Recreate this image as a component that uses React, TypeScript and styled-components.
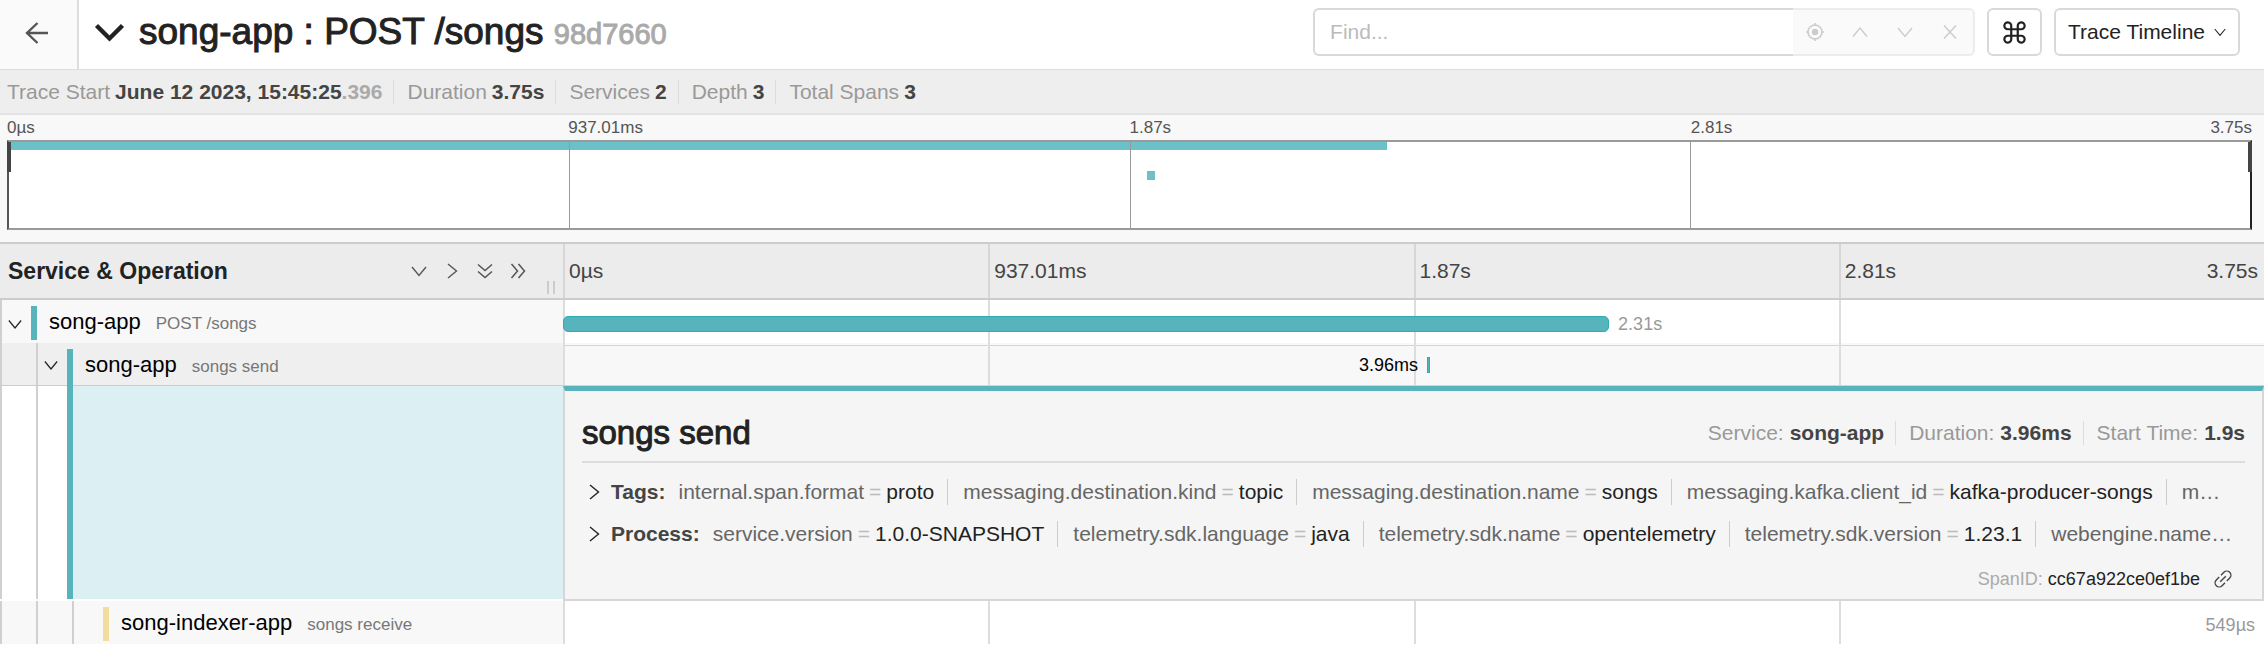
import React from "react";
import styled, { createGlobalStyle, css } from "styled-components";

const TEAL = "#57b4bd";
const SAND = "#f2dca0";

const GlobalStyle = createGlobalStyle`
  *, *::before, *::after { box-sizing: border-box; }
  html, body { margin: 0; padding: 0; background: #fff; }
  body {
    font-family: "Liberation Sans", Arial, sans-serif;
    font-size: 21px;
    line-height: 24px;
    color: #222;
    overflow-x: hidden;
  }
  button, input { font: inherit; color: inherit; margin: 0; }
  h1, h2, h3, ul, dl, dd { margin: 0; padding: 0; font-weight: 400; }
`;

const medium = css`
  -webkit-text-stroke: 1px currentColor;
`;

/* ---------- icons ---------- */

const Svg = styled.svg<{ $stroke?: number }>`
  display: block;
  flex: none;
  overflow: visible;
  fill: none;
  stroke: currentColor;
  stroke-width: ${(p) => p.$stroke ?? 1};
`;

type Dir = "down" | "right" | "up";
const chevrons: Record<Dir, string> = {
  down: "M1 4 L8 12.5 L15 4",
  up: "M1 12.5 L8 4 L15 12.5",
  right: "M4 1 L12.5 8 L4 15",
};

const Chevron = ({ dir, size = 16, stroke = 1.4 }: { dir: Dir; size?: number; stroke?: number }) => (
  <Svg width={size} height={size} viewBox="0 0 16 16" $stroke={stroke} aria-hidden>
    <path d={chevrons[dir]} />
  </Svg>
);

const DoubleDown = () => (
  <Svg width={16} height={16} viewBox="0 0 16 16" $stroke={1.5} aria-hidden>
    <path d="M1 1.5 L8 7.5 L15 1.5 M1 8.5 L8 14.5 L15 8.5" />
  </Svg>
);

const DoubleRight = () => (
  <Svg width={16} height={16} viewBox="0 0 16 16" $stroke={1.5} aria-hidden>
    <path d="M1.5 1 L7.5 8 L1.5 15 M8.5 1 L14.5 8 L8.5 15" />
  </Svg>
);

const BackArrow = () => (
  <Svg width={24} height={22} viewBox="0 0 24 22" $stroke={2.4} aria-hidden>
    <path d="M12.5 1 L2 11 L12.5 21 M2 11 H23" />
  </Svg>
);

const BigChevron = () => (
  <Svg width={29} height={18} viewBox="0 0 29 18" $stroke={4.4} aria-hidden>
    <path d="M1.5 1.5 L14.5 14.5 L27.5 1.5" />
  </Svg>
);

const Locate = () => (
  <Svg width={18} height={18} viewBox="0 0 18 18" $stroke={1.6} aria-hidden>
    <circle cx="9" cy="9" r="7" />
    <circle cx="9" cy="9" r="3.2" fill="currentColor" stroke="none" />
    <path d="M9 0 V3 M9 15 V18 M0 9 H3 M15 9 H18" />
  </Svg>
);

const Cross = () => (
  <Svg width={16} height={16} viewBox="0 0 16 16" $stroke={1.5} aria-hidden>
    <path d="M2 1.5 L14 14.5 M14 1.5 L2 14.5" />
  </Svg>
);

const Command = () => (
  <Svg width={23} height={23} viewBox="0 0 24 24" $stroke={2.3} aria-hidden>
    <path d="M15.4 5.2 V18.8 A3.6 3.6 0 1 0 19 15.4 H5 A3.6 3.6 0 1 0 8.6 18.8 V5.2 A3.6 3.6 0 1 0 5 8.6 H19 A3.6 3.6 0 1 0 15.4 5.2 Z" />
  </Svg>
);

const LinkIcon = () => (
  <Svg width={16} height={16} viewBox="0 0 16 16" $stroke={1.4} aria-hidden>
    <path d="M6 4.2 L8.9 1.3 A3.4 3.4 0 0 1 14.7 7.1 L11.8 10 M10 11.8 L7.1 14.7 A3.4 3.4 0 0 1 1.3 8.9 L4.2 6 M5.2 10.8 L10.8 5.2" />
  </Svg>
);

/* ---------- page header ---------- */

const Header = styled.header`
  display: flex;
  align-items: stretch;
  height: 70px;
  border-bottom: 1px solid #ddd;
`;

const BackLink = styled.a`
  display: flex;
  align-items: center;
  justify-content: center;
  width: 79px;
  padding: 0 4px 4px 0;
  background: #fafafa;
  border-right: 2px solid #ddd;
  color: #555;
`;

const TitleToggle = styled.button`
  display: flex;
  align-items: center;
  gap: 15px;
  padding: 0 0 4px 16px;
  border: 0;
  background: none;
  color: #222;
`;

const TraceTitle = styled.h1`
  font-size: 37px;
  line-height: 44px;
  white-space: nowrap;
  ${medium}
`;

const TraceId = styled.small`
  font-size: 29px;
  color: #aaa;
`;

const Tools = styled.div`
  display: flex;
  flex: 1;
  justify-content: flex-end;
  gap: 12px;
  padding: 8px 24px 13px;
`;

const Search = styled.div`
  display: flex;
  width: 662px;
`;

const FindInput = styled.input`
  flex: 1;
  min-width: 0;
  padding: 0 15px;
  border: 2px solid #d9d9d9;
  border-right: 0;
  border-radius: 6px 0 0 6px;
  background: #fff;
  &::placeholder { color: #bbb; opacity: 1; }
`;

const SearchActions = styled.div`
  display: flex;
  align-items: center;
  width: 182px;
  padding-right: 1px;
  border: 2px solid #ececec;
  border-left: 0;
  border-radius: 0 6px 6px 0;
  background: #fafafa;
`;

const IconButton = styled.button`
  display: flex;
  align-items: center;
  justify-content: center;
  flex: 1;
  padding: 0;
  border: 0;
  background: none;
  color: #ccc;
`;

const OutlineButton = styled.button`
  display: flex;
  align-items: center;
  justify-content: center;
  gap: 9px;
  min-width: 55px;
  padding: 0 12px;
  border: 2px solid #d9d9d9;
  border-radius: 6px;
  background: #fff;
  white-space: nowrap;
`;

/* ---------- summary strip ---------- */

const Summary = styled.dl`
  display: flex;
  align-items: center;
  height: 45px;
  padding: 0 7px;
  background: #eee;
  border-bottom: 2px solid #e4e4e4;
`;

const Fact = styled.div`
  display: flex;
  gap: 5px;
  white-space: nowrap;
  & + & {
    margin-left: 11px;
    padding-left: 13px;
    border-left: 1px solid #ddd;
  }
`;

const FactName = styled.dt`
  color: #999;
`;

const FactValue = styled.dd`
  font-weight: 700;
  color: #444;
`;

const Muted = styled.span`
  color: #aaa;
`;

/* ---------- minimap ---------- */

const Minimap = styled.section`
  padding: 0 12px 12px 7px;
  background: #f8f8f8;
`;

const Ticks = styled.div<{ $small?: boolean }>`
  display: grid;
  grid-template-columns: repeat(4, 1fr);
  font-size: ${(p) => (p.$small ? "17px" : "21px")};
  line-height: 25px;
  color: ${(p) => (p.$small ? "#555" : "#444")};
`;

const Tick = styled.span`
  display: flex;
  justify-content: space-between;
`;

const MapBox = styled.div`
  position: relative;
  height: 90px;
  border: 2px solid #999;
  border-left-color: #555;
  border-right-color: #222;
  background: #fff;
`;

const MapGrid = styled.div`
  display: grid;
  grid-template-columns: repeat(4, 1fr);
  height: 100%;
  & > i + i { position: relative; border-left: 1px solid #999; }
`;

const MapSpan = styled.i<{ $top: number; $h: number; $left: string; $width: string }>`
  position: absolute;
  top: ${(p) => p.$top}px;
  left: ${(p) => p.$left};
  width: ${(p) => p.$width};
  height: ${(p) => p.$h}px;
  background: #6cc1c8;
`;

const Handle = styled.i<{ $side: "left" | "right" }>`
  position: absolute;
  top: 0;
  ${(p) => p.$side}: -2px;
  width: 4px;
  height: 30px;
  background: #444;
`;

/* ---------- timeline ---------- */

const Columns = styled.div`
  display: grid;
  grid-template-columns: 563px minmax(0, 1fr);
`;

const TimelineHead = styled(Columns)`
  height: 58px;
  background: #ececec;
  border-top: 2px solid #ccc;
  border-bottom: 2px solid #ccc;
`;

const NameHead = styled.div`
  position: relative;
  display: flex;
  align-items: center;
  justify-content: space-between;
  padding: 0 37px 0 8px;
`;

const HeadTitle = styled.h2`
  font-size: 23px;
  font-weight: 700;
`;

const Expanders = styled.div`
  display: flex;
  gap: 17px;
  color: #555;
  & > button { flex: none; color: inherit; }
`;

const Resizer = styled.i`
  position: absolute;
  right: 8px;
  bottom: 4px;
  width: 8px;
  height: 13px;
  border: solid #ccc;
  border-width: 0 2px;
`;

const HeadTicks = styled(Ticks)`
  line-height: 54px;
  & > span { padding: 0 6px 0 4px; border-left: 2px solid #d6d6d6; }
`;

const Row = styled(Columns)<{ $active?: boolean }>`
  height: 43px;
  background: ${(p) => (p.$active ? "#f8f8f8" : "#fff")};
`;

const NameCell = styled.div<{ $active?: boolean }>`
  display: flex;
  background: ${(p) => (p.$active ? "#efefef" : "#f8f8f8")};
  border-bottom: 1px solid ${(p) => (p.$active ? "#ccc" : "#fff")};
`;

const Indent = styled.i`
  flex: none;
  width: 36px;
  border-left: 2px solid #d0d0d0;
`;

const Toggle = styled.button`
  display: flex;
  align-items: center;
  justify-content: center;
  width: 31px;
  padding: 2px 3px 0 0;
  border: 0;
  border-left: 2px solid #d0d0d0;
  background: none;
  color: #222;
`;

const Leaf = styled.i`
  width: 31px;
`;

const ServiceLabel = styled.div<{ $color: string; $open?: boolean }>`
  display: flex;
  align-items: baseline;
  gap: 15px;
  margin: ${(p) => (p.$open ? "6px 0 -1px" : "6px 0 5px")};
  padding-left: 12px;
  border-left: 6px solid ${(p) => p.$color};
  line-height: 32px;
  font-size: 22px;
  color: #000;
  white-space: nowrap;
`;

const Operation = styled.small`
  font-size: 17px;
  color: #777;
`;

const TrackCell = styled.div`
  position: relative;
  display: grid;
  grid-template-columns: repeat(4, 1fr);
  border-bottom: 1px solid #d4d4d4;
  & > i { border-left: 2px solid #ddd; }
`;

const SpanLine = styled.div<{ $from: string }>`
  position: absolute;
  inset: 0;
  left: ${(p) => p.$from};
  display: flex;
  align-items: center;
  padding-top: 2px;
  font-size: 18px;
`;

const SpanBar = styled.i<{ $width: string }>`
  flex: none;
  width: ${(p) => p.$width};
  min-width: 3px;
  height: 16px;
  border-radius: ${(p) => (p.$width === "0" ? "0" : "5px")};
  border: 1px solid #2fabb4;
  background: ${TEAL};
`;

const SpanTime = styled.span<{ $side: "left" | "right" | "end" }>`
  color: ${(p) => (p.$side === "left" ? "#000" : "#999")};
  ${(p) =>
    p.$side === "right"
      ? "margin-left: 9px;"
      : p.$side === "left"
        ? "position: absolute; right: 100%; margin-right: 9px;"
        : "margin-left: auto; margin-right: 9px;"}
`;

/* ---------- span detail ---------- */

const DetailRow = styled(Columns)`
  height: 215px;
`;

const DetailTree = styled.div`
  display: flex;
  border-bottom: 2px solid #fff;
`;

const DetailTint = styled.div`
  flex: 1;
  margin-left: 31px;
  border-left: 6px solid ${TEAL};
  background: #dceff2;
`;

const TreeLine = styled.i`
  width: 0;
  border-left: 2px solid #d0d0d0;
  margin-right: -2px;
`;

const Detail = styled.article`
  border: 2px solid #d6d6d6;
  border-top: 5px solid ${TEAL};
  background: #f5f5f5;
  padding: 0 17px;
`;

const DetailHead = styled.div`
  display: flex;
  align-items: center;
  justify-content: space-between;
  height: 72px;
  padding-top: 14px;
  border-bottom: 2px solid #ddd;
`;

const DetailTitle = styled.h3`
  font-size: 33px;
  line-height: 36px;
  ${medium}
`;

const DetailFacts = styled.dl`
  display: flex;
  & > ${Fact} { gap: 6px; }
`;

const Accordion = styled.button`
  display: flex;
  align-items: center;
  width: 100%;
  height: 26px;
  margin-top: 16px;
  padding: 0 12px 0 4px;
  border: 0;
  background: none;
  text-align: left;
  white-space: nowrap;
`;

const AccordionName = styled.strong`
  margin: 0 13px 0 9px;
  color: #444;
`;

const Pairs = styled.span`
  flex: 1;
  min-width: 0;
  overflow: hidden;
  text-overflow: ellipsis;
`;

const Pair = styled.span`
  display: inline-block;
  line-height: 26px;
  & + & {
    margin-left: 13px;
    padding-left: 15px;
    border-left: 1px solid #ccc;
  }
`;

const Key = styled.span`
  color: #666;
`;

const Equals = styled.span`
  padding: 0 5px;
  color: #bbb;
`;

const DetailFoot = styled.footer`
  display: flex;
  align-items: center;
  justify-content: flex-end;
  gap: 5px;
  margin-top: 20px;
  padding-right: 14px;
  font-size: 18px;
`;

const DeepLink = styled.a`
  margin-left: 10px;
  color: #444;
`;

/* ---------- data ---------- */

const ticks = ["0µs", "937.01ms", "1.87s", "2.81s"];
const end = "3.75s";

const tags: [string, string?][] = [
  ["internal.span.format", "proto"],
  ["messaging.destination.kind", "topic"],
  ["messaging.destination.name", "songs"],
  ["messaging.kafka.client_id", "kafka-producer-songs"],
  ["m…"],
];

const process: [string, string?][] = [
  ["service.version", "1.0.0-SNAPSHOT"],
  ["telemetry.sdk.language", "java"],
  ["telemetry.sdk.name", "opentelemetry"],
  ["telemetry.sdk.version", "1.23.1"],
  ["webengine.name…"],
];

const TickLabels = () => (
  <>
    {ticks.map((t, i) => (
      <Tick key={t}>
        {t}
        {i === ticks.length - 1 && <span>{end}</span>}
      </Tick>
    ))}
  </>
);

const GridLines = () => (
  <>
    <i />
    <i />
    <i />
    <i />
  </>
);

const KeyValues = ({ name, items }: { name: string; items: [string, string?][] }) => (
  <Accordion aria-expanded={false}>
    <Chevron dir="right" />
    <AccordionName>{name}:</AccordionName>
    <Pairs>
      {items.map(([k, v]) => (
        <Pair key={k}>
          <Key>{k}</Key>
          {v && (
            <>
              <Equals>=</Equals>
              {v}
            </>
          )}
        </Pair>
      ))}
    </Pairs>
  </Accordion>
);

export default function App() {
  return (
    <>
      <GlobalStyle />
      <Header>
        <BackLink href="#search" aria-label="Back">
          <BackArrow />
        </BackLink>
        <TitleToggle aria-expanded>
          <BigChevron />
          <TraceTitle>
            song-app : POST /songs <TraceId>98d7660</TraceId>
          </TraceTitle>
        </TitleToggle>
        <Tools>
          <Search>
            <FindInput placeholder="Find..." aria-label="Find" />
            <SearchActions>
              <IconButton aria-label="Locate" disabled><Locate /></IconButton>
              <IconButton aria-label="Previous" disabled><Chevron dir="up" /></IconButton>
              <IconButton aria-label="Next" disabled><Chevron dir="down" /></IconButton>
              <IconButton aria-label="Clear" disabled><Cross /></IconButton>
            </SearchActions>
          </Search>
          <OutlineButton aria-label="Keyboard shortcuts"><Command /></OutlineButton>
          <OutlineButton>
            Trace Timeline
            <Chevron dir="down" size={12} />
          </OutlineButton>
        </Tools>
      </Header>

      <Summary>
        <Fact>
          <FactName>Trace Start</FactName>
          <FactValue>June 12 2023, 15:45:25<Muted>.396</Muted></FactValue>
        </Fact>
        <Fact><FactName>Duration</FactName><FactValue>3.75s</FactValue></Fact>
        <Fact><FactName>Services</FactName><FactValue>2</FactValue></Fact>
        <Fact><FactName>Depth</FactName><FactValue>3</FactValue></Fact>
        <Fact><FactName>Total Spans</FactName><FactValue>3</FactValue></Fact>
      </Summary>

      <Minimap>
        <Ticks $small><TickLabels /></Ticks>
        <MapBox>
          <MapSpan $top={0} $h={8} $left="0%" $width="61.5%" />
          <MapSpan $top={29} $h={9} $left="50.8%" $width="8px" />
          <MapGrid><GridLines /></MapGrid>
          <Handle $side="left" />
          <Handle $side="right" />
        </MapBox>
      </Minimap>

      <TimelineHead>
        <NameHead>
          <HeadTitle>Service &amp; Operation</HeadTitle>
          <Expanders>
            <IconButton aria-label="Expand +1"><Chevron dir="down" /></IconButton>
            <IconButton aria-label="Collapse +1"><Chevron dir="right" /></IconButton>
            <IconButton aria-label="Expand all"><DoubleDown /></IconButton>
            <IconButton aria-label="Collapse all"><DoubleRight /></IconButton>
          </Expanders>
          <Resizer />
        </NameHead>
        <HeadTicks><TickLabels /></HeadTicks>
      </TimelineHead>

      <Row>
        <NameCell>
          <Toggle aria-label="Toggle children"><Chevron dir="down" size={14} /></Toggle>
          <ServiceLabel $color={TEAL}>song-app <Operation>POST /songs</Operation></ServiceLabel>
        </NameCell>
        <TrackCell>
          <GridLines />
          <SpanLine $from="0%">
            <SpanBar $width="61.5%" />
            <SpanTime $side="right">2.31s</SpanTime>
          </SpanLine>
        </TrackCell>
      </Row>

      <Row $active>
        <NameCell $active>
          <Indent />
          <Toggle aria-label="Toggle children"><Chevron dir="down" size={14} /></Toggle>
          <ServiceLabel $color={TEAL} $open>song-app <Operation>songs send</Operation></ServiceLabel>
        </NameCell>
        <TrackCell>
          <GridLines />
          <SpanLine $from="50.8%">
            <SpanTime $side="left">3.96ms</SpanTime>
            <SpanBar $width="0" />
          </SpanLine>
        </TrackCell>
      </Row>

      <DetailRow>
        <DetailTree>
          <Indent />
          <TreeLine />
          <DetailTint />
        </DetailTree>
        <Detail>
          <DetailHead>
            <DetailTitle>songs send</DetailTitle>
            <DetailFacts>
              <Fact><FactName>Service:</FactName><FactValue>song-app</FactValue></Fact>
              <Fact><FactName>Duration:</FactName><FactValue>3.96ms</FactValue></Fact>
              <Fact><FactName>Start Time:</FactName><FactValue>1.9s</FactValue></Fact>
            </DetailFacts>
          </DetailHead>
          <KeyValues name="Tags" items={tags} />
          <KeyValues name="Process" items={process} />
          <DetailFoot>
            <Muted>SpanID:</Muted>
            <span>cc67a922ce0ef1be</span>
            <DeepLink href="#span" aria-label="Link to span"><LinkIcon /></DeepLink>
          </DetailFoot>
        </Detail>
      </DetailRow>

      <Row>
        <NameCell>
          <Indent />
          <Indent />
          <TreeLine />
          <Leaf />
          <ServiceLabel $color={SAND}>song-indexer-app <Operation>songs receive</Operation></ServiceLabel>
        </NameCell>
        <TrackCell>
          <GridLines />
          <SpanLine $from="0%">
            <SpanTime $side="end">549µs</SpanTime>
          </SpanLine>
        </TrackCell>
      </Row>
    </>
  );
}
